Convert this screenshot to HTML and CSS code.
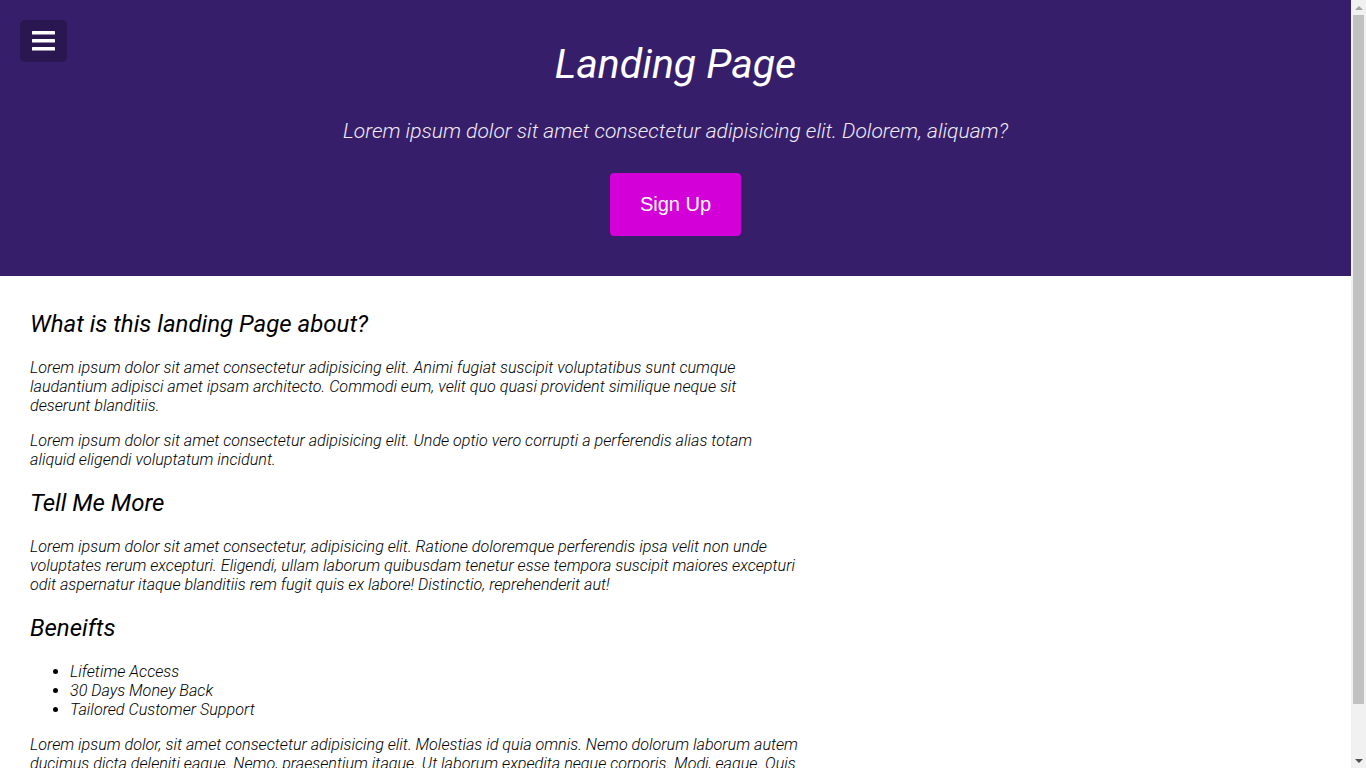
FILE: index.html
```html
<!DOCTYPE html>
<html lang="en">
<head>
<meta charset="utf-8">
<title>Landing Page</title>
<link rel="stylesheet" href="styles.css">
</head>
<body>
<header class="hero">
  <button class="menu-btn" aria-label="Menu">
    <svg width="23" height="20" viewBox="0 0 23 20"><rect x="0" y="0" width="23" height="3.5" rx="0.5" fill="#fff"/><rect x="0" y="8" width="23" height="3.5" rx="0.5" fill="#fff"/><rect x="0" y="16" width="23" height="3.5" rx="0.5" fill="#fff"/></svg>
  </button>
  <h1 class="hero-title">Landing Page</h1>
  <p class="hero-sub">Lorem ipsum dolor sit amet consectetur adipisicing elit. Dolorem, aliquam?</p>
  <button class="signup">Sign Up</button>
</header>
<main class="content">
  <h2>What is this landing Page about?</h2>
  <p>Lorem ipsum dolor sit amet consectetur adipisicing elit. Animi fugiat suscipit voluptatibus sunt cumque laudantium adipisci amet ipsam architecto. Commodi eum, velit quo quasi provident similique neque sit deserunt blanditiis.</p>
  <p>Lorem ipsum dolor sit amet consectetur adipisicing elit. Unde optio vero corrupti a perferendis alias totam aliquid eligendi voluptatum incidunt.</p>
  <h2>Tell Me More</h2>
  <p>Lorem ipsum dolor sit amet consectetur, adipisicing elit. Ratione doloremque perferendis ipsa velit non unde voluptates rerum excepturi. Eligendi, ullam laborum quibusdam tenetur esse tempora suscipit maiores excepturi odit aspernatur itaque blanditiis rem fugit quis ex labore! Distinctio, reprehenderit aut!</p>
  <h2>Beneifts</h2>
  <ul>
    <li>Lifetime Access</li>
    <li>30 Days Money Back</li>
    <li>Tailored Customer Support</li>
  </ul>
  <p>Lorem ipsum dolor, sit amet consectetur adipisicing elit. Molestias id quia omnis. Nemo dolorum laborum autem ducimus dicta deleniti eaque. Nemo, praesentium itaque. Ut laborum expedita neque corporis. Modi, eaque. Quis quod deserunt voluptatibus, natus nesciunt dolores.</p>
</main>
<div class="scrollbar" aria-hidden="true">
  <div class="sb-btn">
    <svg width="8" height="4" viewBox="0 0 8 4"><polygon points="0,4 8,4 4,0" fill="#a3a3a3"/></svg>
  </div>
  <div class="sb-track"><div class="sb-thumb"></div></div>
  <div class="sb-btn">
    <svg width="8" height="4" viewBox="0 0 8 4"><polygon points="0,0 8,0 4,4" fill="#505050"/></svg>
  </div>
</div>
</body>
</html>
```
FILE: styles.css
```css
html, body {
  margin: 0;
  padding: 0;
}
body {
  margin-right: 15px;
  font-family: Roboto, "Liberation Sans", sans-serif;
  font-style: italic;
  font-weight: 300;
  color: #000;
  background: #fff;
}
.hero {
  position: relative;
  background: #371e6b;
  color: #fff;
  text-align: center;
  padding: 40px 20px 40px;
}
.menu-btn {
  position: absolute;
  top: 20px;
  left: 20px;
  width: 47px;
  height: 42px;
  border: none;
  border-radius: 5px;
  background: #2a1650;
  display: flex;
  align-items: center;
  justify-content: center;
  padding: 0;
  cursor: pointer;
}
.hero-title {
  margin: 0;
  font-size: 41px;
  line-height: 48px;
  font-weight: 400;
  font-style: italic;
}
.hero-sub {
  margin: 31px 0 30px;
  font-size: 21px;
  line-height: 24px;
  font-weight: 300;
  color: #f0ecf6;
}
.signup {
  font-family: "Liberation Sans", Arial, sans-serif;
  font-style: normal;
  font-size: 20px;
  line-height: 23px;
  color: #fff;
  background: #d400d8;
  border: none;
  border-radius: 4px;
  padding: 20px 30px;
  cursor: pointer;
}
.content {
  max-width: 770px;
  padding: 14px 30px 14px;
  font-size: 16.15px;
  line-height: 19px;
}
.content h2 {
  font-size: 24px;
  line-height: 28px;
  font-weight: 400;
  font-style: italic;
  margin: 20px 0;
}
.content p {
  margin: 16px 0;
}
.content ul {
  margin: 16px 0;
  padding-left: 40px;
}
.scrollbar {
  position: fixed;
  top: 0;
  right: 0;
  width: 15px;
  height: 100vh;
  background: #f1f1f1;
  display: flex;
  flex-direction: column;
}
.sb-btn {
  height: 15px;
  flex: 0 0 15px;
  display: flex;
  align-items: center;
  justify-content: center;
}
.sb-track {
  flex: 1;
  padding: 0 2px;
  display: flex;
  flex-direction: column;
}
.sb-thumb {
  height: 689px;
  background: #c1c1c1;
}
```
